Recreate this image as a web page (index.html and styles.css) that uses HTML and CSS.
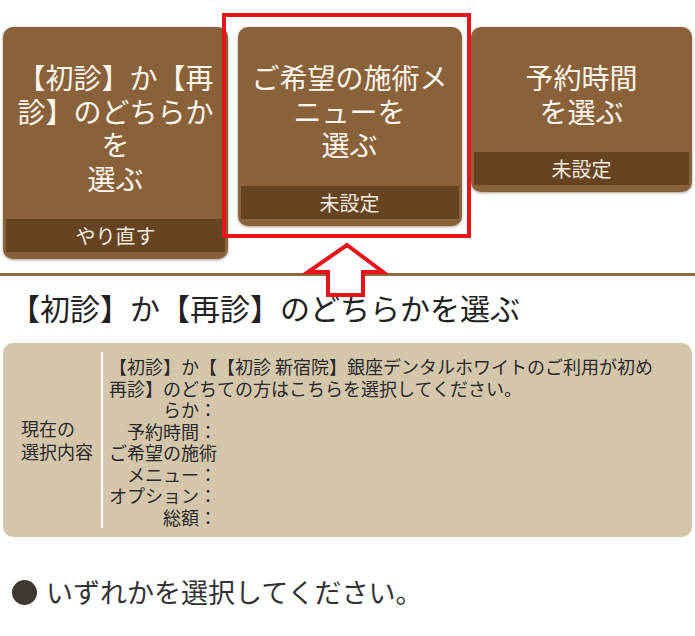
FILE: index.html
```html
<!DOCTYPE html>
<html lang="ja">
<head>
<meta charset="utf-8">
<title>予約</title>
<link rel="stylesheet" href="styles.css">
</head>
<body>
<div class="page">
  <div class="steps">
    <div class="step">
      <div class="step-title">【初診】か【再診】のどちらかを<br>選ぶ</div>
      <div class="step-foot">やり直す</div>
    </div>
    <div class="step">
      <div class="step-title">ご希望の施術メニューを<br>選ぶ</div>
      <div class="step-foot">未設定</div>
    </div>
    <div class="step">
      <div class="step-title">予約時間<br>を選ぶ</div>
      <div class="step-foot">未設定</div>
    </div>
  </div>

  <div class="annot-box"></div>
  <svg class="annot-arrow" width="90" height="66" viewBox="0 0 90 66">
    <polygon points="47,7 83,34 63,34 63,57 28,57 28,34 8,34" fill="#fff" stroke="#e8141c" stroke-width="4" stroke-linejoin="miter"/>
  </svg>

  <div class="divider"></div>

  <h2 class="heading">【初診】か【再診】のどちらかを選ぶ</h2>

  <div class="summary">
    <div class="summary-label">現在の<br>選択内容</div>
    <dl class="summary-list">
      <div class="row"><dt>【初診】か【再診】のどちらか：</dt><dd>【初診 新宿院】銀座デンタルホワイトのご利用が初めての方はこちらを選択してください。</dd></div>
      <div class="row"><dt>予約時間：</dt><dd></dd></div>
      <div class="row"><dt>ご希望の施術メニュー：</dt><dd></dd></div>
      <div class="row"><dt>オプション：</dt><dd></dd></div>
      <div class="row"><dt>総額：</dt><dd></dd></div>
    </dl>
  </div>

  <p class="notice"><span class="dot"></span>いずれかを選択してください。</p>
</div>
</body>
</html>
```

FILE: styles.css
```css
html, body {
  margin: 0;
  padding: 0;
  background: #fff;
}
body {
  font-family: "Noto Sans CJK JP", "Noto Sans", sans-serif;
  color: #222;
}
.page {
  position: relative;
  width: 695px;
  height: 636px;
  overflow: hidden;
}
.steps {
  display: grid;
  grid-template-columns: 225px 224px 221px;
  column-gap: 8px;
  justify-content: space-between;
  align-items: start;
  padding: 27px 3px 14px 3px;
}
.step {
  background: #8a623a;
  border-radius: 10px;
  padding: 0 3px 7px 3px;
  box-shadow: 0 1px 3px rgba(60, 40, 20, 0.45);
  display: flex;
  flex-direction: column;
}
.step-title {
  color: #fbf6ee;
  font-size: 28px;
  line-height: 33.5px;
  text-align: center;
  padding: 34px 6px 24px 6px;
  line-break: anywhere;
}
.step-foot {
  background: #674421;
  color: #f3ebdf;
  font-size: 20px;
  height: 33px;
  line-height: 33px;
  text-align: center;
}
.annot-box {
  position: absolute;
  left: 222px;
  top: 13px;
  width: 249px;
  height: 225px;
  border: 4px solid #e8141c;
  box-sizing: border-box;
}
.annot-arrow {
  position: absolute;
  left: 300px;
  top: 238px;
  z-index: 2;
}
.divider {
  height: 3px;
  background: #8b6a3e;
}
.heading {
  margin: 12px 0 0 0;
  padding-left: 10px;
  font-size: 30px;
  font-weight: normal;
  line-height: 39px;
  color: #222;
}
.summary {
  margin: 16px 3px 0 3px;
  height: 194px;
  box-sizing: border-box;
  background: #d3c6ab;
  border-radius: 10px;
  padding: 9px 30px 9px 0;
  display: flex;
  color: #2a2a2a;
  font-size: 18px;
  line-height: 21.5px;
}
.summary-label {
  width: 88px;
  margin-left: 10px;
  border-right: 2px solid #fff;
  display: flex;
  align-items: center;
  justify-content: center;
  text-align: left;
  line-height: 23px;
}
.summary-list {
  margin: 0;
  padding-top: 4px;
  flex: 1;
}
.row {
  display: flex;
}
.row dt {
  width: 114px;
  flex: none;
  text-align: right;
  line-break: anywhere;
}
.row dd {
  margin: 0;
  flex: 1;
}
.notice {
  margin: 37px 0 0 12px;
  display: flex;
  align-items: center;
  font-size: 27px;
  line-height: 36px;
  color: #333;
}
.dot {
  width: 25px;
  height: 25px;
  border-radius: 50%;
  background: #3e3832;
  margin-right: 9px;
  flex: none;
}
```
